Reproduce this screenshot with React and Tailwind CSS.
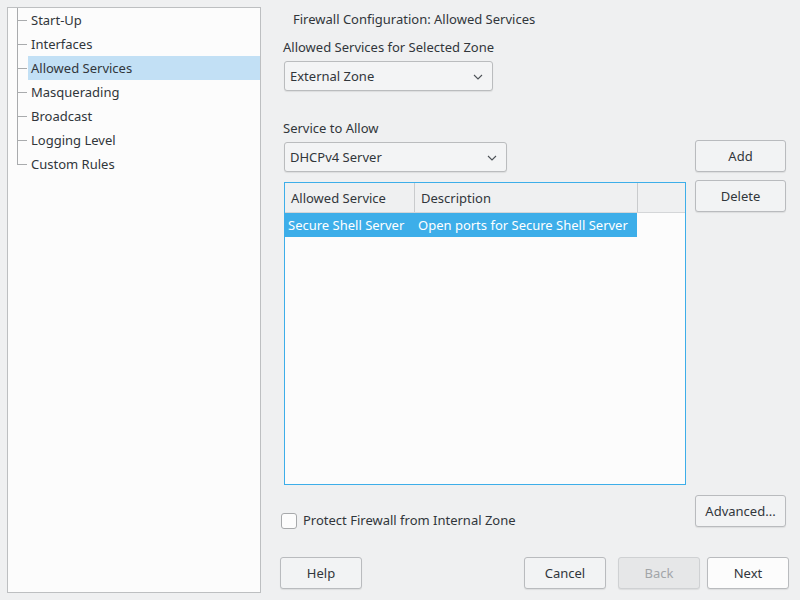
import React from 'react';

const pasos = [
  'Start-Up',
  'Interfaces',
  'Allowed Services',
  'Masquerading',
  'Broadcast',
  'Logging Level',
  'Custom Rules',
];

const Chevron = () => (
  <svg width="10" height="6" viewBox="0 0 10 6" className="text-[#4d5257]">
    <path d="M1 1 L5 5 L9 1" fill="none" stroke="currentColor" strokeWidth="1.1" />
  </svg>
);

const Boton = ({ children, className = '', disabled = false, principal = false }) => (
  <button
    disabled={disabled}
    className={
      'h-[32px] rounded-[3px] border pt-[2px] text-[13px] shadow-[0_1px_1px_rgba(0,0,0,0.08)] ' +
      (disabled
        ? 'border-[#cfd1d3] bg-[#e6e7e8] text-[#a2a5a8] '
        : principal
        ? 'border-[#b9bbbe] bg-[#fcfcfc] text-[#31363b] '
        : 'border-[#b9bbbe] bg-[#f2f3f4] text-[#31363b] ') +
      className
    }
  >
    {children}
  </button>
);

const Combo = ({ texto, ancho }) => (
  <div
    className={
      'ml-[4px] flex h-[30px] items-center justify-between rounded-[3px] border border-[#babcbe] bg-[#f3f4f5] pl-[5px] pr-[9px] pt-[2px] shadow-[0_1px_1px_rgba(0,0,0,0.08)] ' +
      ancho
    }
  >
    <span>{texto}</span>
    <Chevron />
  </div>
);

export default function App() {
  return (
    <div
      className="flex h-[600px] w-[800px] bg-[#eff0f1] text-[13px] text-[#31363b]"
      style={{ fontFamily: '"Noto Sans", "Open Sans", sans-serif' }}
    >
      {/* Árbol de pasos */}
      <div className="ml-[7px] mt-[7px] h-[586px] w-[254px] border border-[#bdbfc1] bg-[#fcfcfc]">
        {pasos.map((paso, i) => (
          <div key={paso} className="flex h-[24px]">
            <div className="relative w-[20px]">
              <span
                className={
                  'absolute left-[9px] top-0 w-px bg-[#a9abad] ' + (i === pasos.length - 1 ? 'h-[12px]' : 'h-[24px]')
                }
              />
              <span className="absolute left-[9px] top-[12px] h-px w-[10px] bg-[#a9abad]" />
            </div>
            <div
              className={
                'flex flex-1 items-center pl-[3px] pt-[2px] ' + (paso === 'Allowed Services' ? 'bg-[#c2e0f5]' : '')
              }
            >
              {paso}
            </div>
          </div>
        ))}
      </div>

      {/* Panel derecho */}
      <div className="flex flex-1 flex-col pl-[19px]">
        <div className="flex">
          <div className="flex w-[406px] flex-col">
            <div className="flex h-[38px] items-center pl-[13px] pt-[2px]">Firewall Configuration: Allowed Services</div>
            <div className="flex h-[18px] items-center pl-[3px] pt-[2px]">Allowed Services for Selected Zone</div>
            <div className="mt-[5px]">
              <Combo texto="External Zone" ancho="w-[209px]" />
            </div>
            <div className="mt-[28px] flex h-[18px] items-center pl-[3px] pt-[2px]">Service to Allow</div>
            <div className="mt-[5px]">
              <Combo texto="DHCPv4 Server" ancho="w-[223px]" />
            </div>

            {/* Tabla de servicios */}
            <div className="ml-[4px] mt-[10px] h-[303px] w-[402px] border border-[#3daee9] bg-[#fcfcfc]">
              <div className="flex h-[30px] border-b border-[#d4d6d8] bg-[#eff0f1]">
                <div className="flex w-[130px] items-center border-r border-[#c9cbcd] pl-[6px] pt-[2px]">Allowed Service</div>
                <div className="flex w-[223px] items-center border-r border-[#c9cbcd] pl-[6px] pt-[2px]">Description</div>
                <div className="flex-1" />
              </div>
              <div className="flex h-[24px] w-[352px] items-center bg-[#3daee9] pt-[2px] text-white">
                <div className="w-[130px] pl-[3px]">Secure Shell Server</div>
                <div className="pl-[3px]">Open ports for Secure Shell Server</div>
              </div>
            </div>

            <label className="mt-[27px] flex h-[16px] items-center gap-[6px] pl-[1px]">
              <span className="mt-[2px] h-[16px] w-[16px] shrink-0 rounded-[3px] border border-[#a7a9ab] bg-[#fcfcfc]" />
              <span className="pt-[2px]">Protect Firewall from Internal Zone</span>
            </label>
          </div>

          <div className="ml-[9px] flex w-[91px] flex-col">
            <Boton className="mt-[140px]">Add</Boton>
            <Boton className="mt-[8px]">Delete</Boton>
            <Boton className="mt-[283px]">Advanced...</Boton>
          </div>
        </div>

        {/* Botones inferiores */}
        <div className="mt-[29px] flex">
          <Boton className="w-[82px]">Help</Boton>
          <div className="flex-1" />
          <Boton className="w-[82px]">Cancel</Boton>
          <Boton className="ml-[12px] w-[82px]" disabled>
            Back
          </Boton>
          <Boton className="ml-[7px] w-[82px]" principal>
            Next
          </Boton>
          <div className="w-[11px]" />
        </div>
      </div>
    </div>
  );
}
